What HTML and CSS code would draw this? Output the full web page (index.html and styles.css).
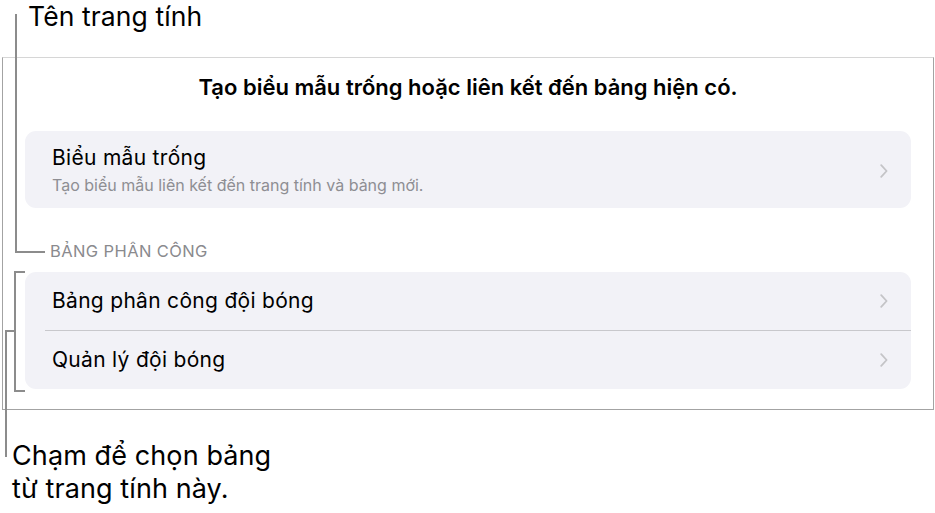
FILE: index.html
```html
<!DOCTYPE html>
<html lang="vi">
<head>
<meta charset="utf-8">
<title>Biểu mẫu</title>
<link rel="stylesheet" href="styles.css">
</head>
<body>
<div class="page">
  <div class="callout-top">Tên trang tính</div>

  <section class="panel">
    <h1 class="panel-title">Tạo biểu mẫu trống hoặc liên kết đến bảng hiện có.</h1>

    <div class="card card-single">
      <div class="row row-tall">
        <div class="row-text">
          <div class="row-title">Biểu mẫu trống</div>
          <div class="row-sub">Tạo biểu mẫu liên kết đến trang tính và bảng mới.</div>
        </div>
        <svg class="chev" viewBox="0 0 8 14" width="8" height="14"><path d="M1.2 1.2 L6.6 7 L1.2 12.8" fill="none" stroke="currentColor" stroke-width="1.8" stroke-linecap="round" stroke-linejoin="round"/></svg>
      </div>
    </div>

    <div class="section-header">BẢNG PHÂN CÔNG</div>

    <div class="card card-list">
      <div class="row">
        <div class="row-title">Bảng phân công đội bóng</div>
        <svg class="chev" viewBox="0 0 8 14" width="8" height="14"><path d="M1.2 1.2 L6.6 7 L1.2 12.8" fill="none" stroke="currentColor" stroke-width="1.8" stroke-linecap="round" stroke-linejoin="round"/></svg>
      </div>
      <div class="sep"></div>
      <div class="row">
        <div class="row-title">Quản lý đội bóng</div>
        <svg class="chev" viewBox="0 0 8 14" width="8" height="14"><path d="M1.2 1.2 L6.6 7 L1.2 12.8" fill="none" stroke="currentColor" stroke-width="1.8" stroke-linecap="round" stroke-linejoin="round"/></svg>
      </div>
    </div>
  </section>

  <div class="callout-bottom">Chạm để chọn bảng<br>từ trang tính này.</div>

  <div class="leader leader-name"></div>
  <div class="leader leader-bracket"></div>
  <div class="leader leader-tap"></div>
</div>
</body>
</html>
```
FILE: styles.css
```css
html, body {
  margin: 0;
  padding: 0;
  background: #ffffff;
}

body {
  font-family: Inter, "Noto Sans", "Liberation Sans", sans-serif;
  color: #000;
}

.page {
  position: relative;
  width: 935px;
  height: 513px;
  overflow: hidden;
}

.callout-top {
  height: 57px;
  box-sizing: border-box;
  padding: 1px 0 0 28px;
  font-size: 26.5px;
  line-height: 30px;
  letter-spacing: 0.1px;
}

.panel {
  margin-left: 2px;
  width: 932px;
  box-sizing: border-box;
  border: 1px solid #a3a3a3;
  border-top-color: #d6d6d6;
  padding: 16px 22px 20px 22px;
}

.panel-title {
  margin: 0;
  text-align: center;
  font-size: 22px;
  line-height: 26px;
  font-weight: 600;
  letter-spacing: 0;
}

.card {
  background: #f2f2f7;
  border-radius: 11px;
}

.card-single {
  margin-top: 31px;
}

.row {
  display: flex;
  align-items: center;
  justify-content: space-between;
  height: 58px;
  padding: 0 23px 0 27px;
}

.row-tall {
  height: 77px;
  box-sizing: border-box;
  padding-top: 2px;
}

.row-title {
  font-size: 21px;
  line-height: 24px;
  letter-spacing: 0.3px;
}

.row-sub {
  margin-top: 5px;
  font-size: 16px;
  line-height: 20px;
  color: #8e8e93;
  letter-spacing: 0;
}

.chev {
  color: #c4c4c7;
  flex: none;
}

.section-header {
  margin: 34px 0 0 25px;
  font-size: 16.5px;
  line-height: 18px;
  color: #8a8a8e;
  letter-spacing: 0.4px;
}

.card-list {
  margin-top: 12px;
}

.sep {
  height: 1px;
  margin-left: 20px;
  background: #c8c8cc;
}

.callout-bottom {
  margin-top: 29px;
  padding-left: 12px;
  font-size: 27px;
  line-height: 33px;
  letter-spacing: 0.1px;
}

/* annotation leader lines drawn over the screenshot */
.leader {
  position: absolute;
  box-sizing: border-box;
  border-color: #8c8c8c;
  border-style: solid;
  border-width: 0;
}

.leader-name {
  left: 15px;
  top: 14px;
  width: 30px;
  height: 239px;
  border-left-width: 2px;
  border-bottom-width: 2px;
}

.leader-bracket {
  left: 14px;
  top: 271px;
  width: 11px;
  height: 121px;
  border-left-width: 2px;
  border-top-width: 2px;
  border-bottom-width: 2px;
}

.leader-tap {
  left: 5px;
  top: 330px;
  width: 10px;
  height: 127px;
  border-left-width: 2px;
  border-top-width: 2px;
}
```
